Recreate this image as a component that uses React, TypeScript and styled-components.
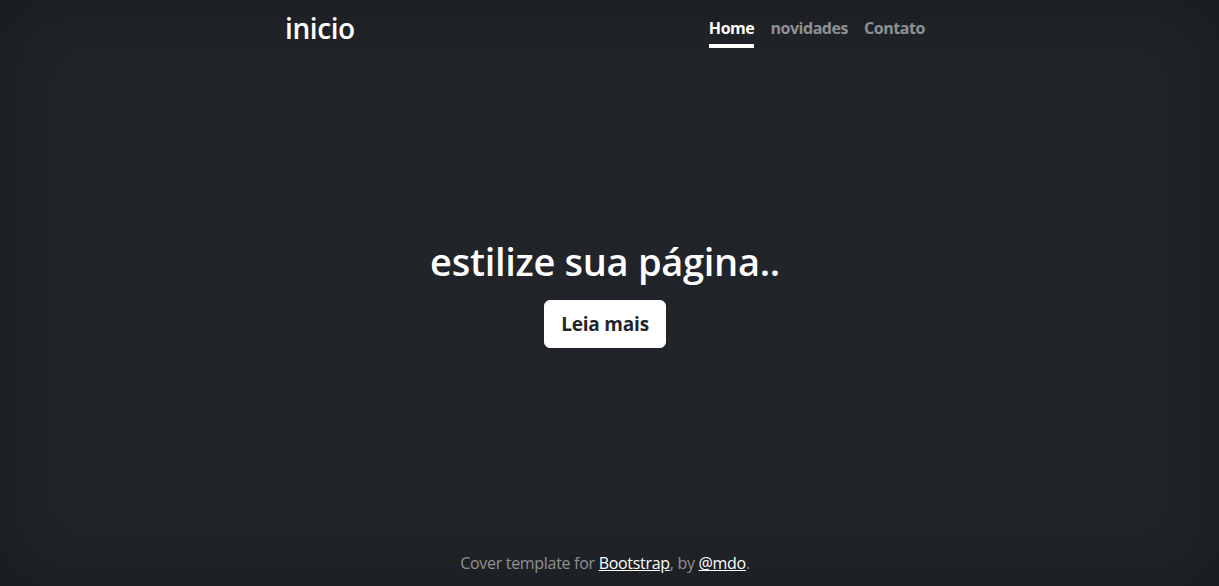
import styled, { createGlobalStyle } from 'styled-components'

const GlobalStyle = createGlobalStyle`
  html, body, #root {
    height: 100%;
  }

  body {
    margin: 0;
    background: #212529;
    color: #fff;
    font-family: "Open Sans", "Noto Sans", sans-serif;
    box-shadow: inset 0 0 5rem rgba(0, 0, 0, 0.3);
  }
`

const Page = styled.div`
  height: 100%;
  display: flex;
  padding-right: 9px;
  box-sizing: border-box;
  text-align: center;
`

const Cover = styled.div`
  display: flex;
  flex-direction: column;
  width: 100%;
  max-width: 672px;
  height: 100%;
  margin: 0 auto;
  padding: 12px 16px 11px;
  box-sizing: border-box;
`

const Header = styled.header`
  display: flex;
  justify-content: space-between;
  align-items: flex-start;
  margin-bottom: auto;
`

const Brand = styled.h3`
  margin: 0;
  font-size: 28px;
  font-weight: 600;
  line-height: 1.2;
  letter-spacing: -0.4px;
`

const Nav = styled.nav`
  display: flex;
  gap: 16px;
`

const NavLink = styled.a<{ $active?: boolean }>`
  display: block;
  padding: 4px 0;
  font-size: 16px;
  font-weight: 700;
  line-height: 24px;
  letter-spacing: -0.45px;
  color: ${(p) => (p.$active ? '#fff' : 'rgba(255, 255, 255, 0.5)')};
  text-decoration: none;
  border-bottom: 4px solid ${(p) => (p.$active ? '#fff' : 'transparent')};
  cursor: pointer;
`

const Main = styled.main`
  padding: 0 16px;
`

const Title = styled.h1`
  margin: 0 0 16px;
  font-size: 38px;
  font-weight: 600;
  line-height: 1.2;
  letter-spacing: -0.3px;
`

const Lead = styled.p`
  margin: 0 0 12px;
  font-size: 20px;
  line-height: 1.5;
`

const Button = styled.a`
  display: inline-block;
  padding: 8px 16px;
  font-size: 19px;
  font-weight: 700;
  line-height: 30px;
  color: #212529;
  background: #fff;
  border: 1px solid #fff;
  border-radius: 6px;
  text-decoration: none;
  letter-spacing: -0.2px;
`

const Footer = styled.footer`
  margin-top: auto;
  font-size: 16px;
  line-height: 24px;
  color: rgba(255, 255, 255, 0.5);
  letter-spacing: -0.3px;

  p {
    margin: 0;
  }

  a {
    color: #fff;
    text-decoration: underline;
  }
`

const App = () => {
  const links = ['Home', 'novidades', 'Contato']

  return (
    <>
      <GlobalStyle />
      <Page>
        <Cover>
          <Header>
            <Brand>inicio</Brand>
            <Nav>
              {links.map((label, i) => (
                <NavLink key={label} $active={i === 0}>
                  {label}
                </NavLink>
              ))}
            </Nav>
          </Header>

          <Main>
            <Title>estilize sua página..</Title>
            <Lead>
              <Button>Leia mais</Button>
            </Lead>
          </Main>

          <Footer>
            <p>
              Cover template for <a>Bootstrap</a>, by <a>@mdo</a>.
            </p>
          </Footer>
        </Cover>
      </Page>
    </>
  )
}

export default App
